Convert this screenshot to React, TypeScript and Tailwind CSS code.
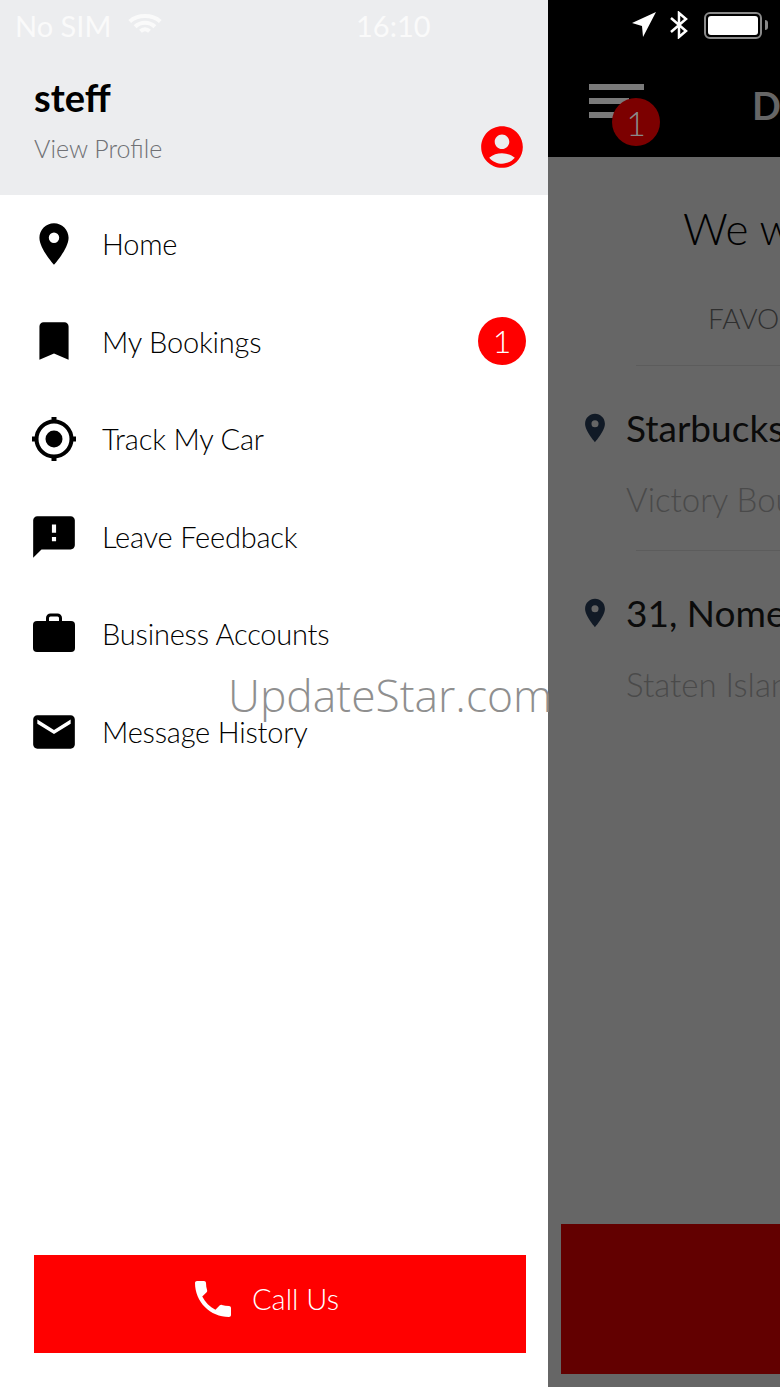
import { MdAccountCircle, MdBookmark, MdEmail, MdFeedback, MdLocationOn, MdPhone } from "react-icons/md";

function TargetIcon() {
    return (
        <svg width="50" height="50" viewBox="0 0 50 50" className="shrink-0 text-black">
            <circle cx="25" cy="25" r="17.5" fill="none" stroke="currentColor" strokeWidth="4" />
            <circle cx="25" cy="25" r="8.5" fill="currentColor" />
            <path d="M25 3 V9 M25 41 V47 M3 25 H9 M41 25 H47" stroke="currentColor" strokeWidth="5" />
        </svg>
    );
}

function CaseIcon() {
    return (
        <svg width="50" height="50" viewBox="0 0 50 50" className="shrink-0 text-black">
            <rect x="4" y="12" width="42" height="31" rx="4" fill="currentColor" />
            <path d="M18.5 13 V9 a3 3 0 0 1 3-3 h7 a3 3 0 0 1 3 3 V13" fill="none" stroke="currentColor" strokeWidth="3" />
        </svg>
    );
}

const menu = [
    { label: "Home", icon: <MdLocationOn size={50} className="shrink-0 text-black" /> },
    { label: "My Bookings", icon: <MdBookmark size={50} className="shrink-0 text-black" />, badge: true },
    { label: "Track My Car", icon: <TargetIcon /> },
    { label: "Leave Feedback", icon: <MdFeedback size={50} className="shrink-0 text-black" /> },
    { label: "Business Accounts", icon: <CaseIcon /> },
    { label: "Message History", icon: <MdEmail size={50} className="shrink-0 text-black" /> },
];

const places = [
    { title: "Starbucks", sub: "Victory Boulevard" },
    { title: "31, Nome Avenue", sub: "Staten Island" },
];

function Drawer() {
    return (
        <div className="flex w-[548px] shrink-0 flex-col bg-white">
            <div className="h-[195px] bg-[#ecedef]">
                <div className="flex h-[50px] items-center pl-[16px] text-[29px] font-normal text-[#fafafa]">
                    <span className="w-[97px] -ml-[1px] leading-none whitespace-nowrap">No SIM</span>
                    <svg className="ml-[15px]" width="36" height="26" viewBox="0 0 40 26" fill="none" stroke="#fafafa" strokeWidth="4.5">
                        <path d="M3 9 C12 1 28 1 37 9" />
                        <path d="M9 15 C15 9 25 9 31 15" />
                        <path d="M15 20 C18 17 22 17 25 20" />
                    </svg>
                    <span className="ml-[193px] leading-none">16:10</span>
                </div>
                <div className="flex items-end justify-between pl-[34px] pr-[21px]">
                    <div>
                        <div className="mt-[23px] text-[38px] leading-[48px] font-bold text-black">steff</div>
                        <div className="mt-[11px] text-[25px] leading-[32px] font-light text-[#707175]">View Profile</div>
                    </div>
                    <MdAccountCircle size={50} className="-mb-[8px] text-[#ff0000]" />
                </div>
            </div>

            <div className="flex flex-col">
                {menu.map((item) => (
                    <div key={item.label} className="flex h-[97.6px] items-center pl-[29px] pr-[22px]">
                        {item.icon}
                        <span className="ml-[24px] -translate-x-px text-[29px] tracking-[-0.2px] font-light text-black">{item.label}</span>
                        {item.badge && (
                            <span className="ml-auto flex size-[48px] items-center justify-center rounded-full bg-[#ff0000] text-[32px] font-light text-white">
                                1
                            </span>
                        )}
                    </div>
                ))}
            </div>

            <div className="mt-auto mb-[34px] ml-[34px] mr-[22px] flex h-[98px] items-center justify-center bg-[#ff0000] pr-[32px] pb-[10px]">
                <MdPhone size={48} className="text-white" />
                <span className="ml-[15px] text-[29px] font-light text-white">Call Us</span>
            </div>
        </div>
    );
}

function Behind() {
    return (
        <div className="flex min-w-0 flex-1 flex-col overflow-hidden bg-[#666666] whitespace-nowrap">
            <div className="h-[157px] shrink-0 bg-black">
                <div className="flex h-[50px] items-center pl-[84px]">
                    <svg width="24" height="26" viewBox="0 0 24 26" fill="white">
                        <path d="M24 0 L11 25 L10 14 L0 11 Z" />
                    </svg>
                    <svg className="ml-[13px]" width="20" height="28" viewBox="0 0 20 28" fill="none" stroke="white" strokeWidth="2.5">
                        <path d="M2 7 L17 20 L10 26 V2 L17 8 L2 21" />
                    </svg>
                    <div className="ml-[15px] flex h-[27px] w-[58px] items-center rounded-[6px] border-[2px] border-[#8a8a8a] p-[2px]">
                        <div className="h-full w-full rounded-[3px] bg-white" />
                    </div>
                    <div className="ml-[3px] h-[10px] w-[3px] rounded-r-full bg-[#8a8a8a]" />
                </div>
                <div className="flex items-start pl-[41px] pt-[34px]">
                    <div className="relative h-[36px] w-[55px]">
                        <div className="flex flex-col gap-[8px]">
                            <div className="h-[6px] w-[55px] bg-[#7a7a7a]" />
                            <div className="h-[6px] w-[40px] bg-[#7a7a7a]" />
                            <div className="h-[6px] w-[30px] bg-[#7a7a7a]" />
                        </div>
                        <span className="absolute left-[23px] top-[14px] flex size-[48px] items-center justify-center rounded-full bg-[#7c0000] text-[34px] font-light text-[#8a8a8a]">
                            1
                        </span>
                    </div>
                    <span className="ml-[108px] -mt-[7px] text-[38px] font-bold text-[#666666]">Dashboard</span>
                </div>
            </div>

            <div className="mt-[41px] pl-[135px] text-[44px] leading-[60px] font-light text-black">We would</div>
            <div className="mt-[42px] pl-[160px] text-[28px] leading-[36px] font-light text-[#2f2f2f]">FAVOURITES</div>

            <div className="mt-[29px] ml-[37px] flex flex-col gap-[32px]">
                {places.map((place) => (
                    <div key={place.title} className="flex flex-col">
                        <div className="ml-[51px] h-px bg-[#5c5c5c]" />
                        <div className="mt-[43px] flex items-center">
                            <MdLocationOn size={34} className="-ml-[7px] shrink-0 text-[#111a26]" />
                            <span className="ml-[14px] text-[37px] leading-[38px] text-[#0b0b0b]">{place.title}</span>
                        </div>
                        <div className="mt-[33px] ml-[41px] text-[33px] leading-[38px] font-light text-[#4a4a4a]">{place.sub}</div>
                    </div>
                ))}
            </div>

            <div className="mt-auto mb-[13px] ml-[13px] h-[150px] shrink-0 bg-[#620000]" />
        </div>
    );
}

export default function App() {
    return (
        <div className="relative flex h-[1387px] w-[780px] overflow-hidden [font-family:Lato,sans-serif]">
            <Drawer />
            <Behind />
            <span className="absolute left-[228px] top-[665px] text-[44.4px] leading-[60px] font-light text-[#8f8f8f] [font-family:'Open_Sans',sans-serif]">
                UpdateStar.com
            </span>
        </div>
    );
}
